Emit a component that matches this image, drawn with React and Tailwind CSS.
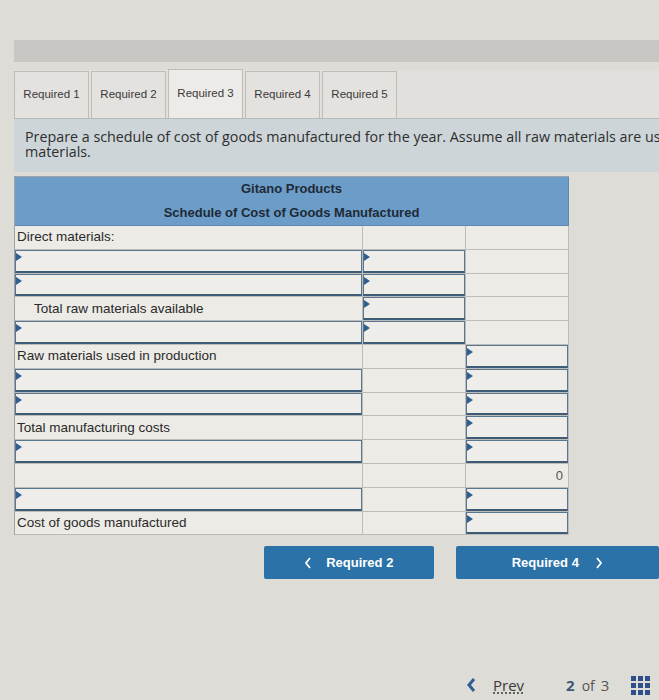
import React from "react";

const rows = [
  { label: "Direct materials:", c1: "text", c2: "empty", c3: "empty" },
  { c1: "input", c2: "input", c3: "empty" },
  { c1: "input", c2: "input", c3: "empty" },
  { label: "Total raw materials available", indent: true, c1: "text", c2: "input", c3: "empty" },
  { c1: "input", c2: "input", c3: "empty" },
  { label: "Raw materials used in production", c1: "text", c2: "empty", c3: "input" },
  { c1: "input", c2: "empty", c3: "input" },
  { c1: "input", c2: "empty", c3: "input" },
  { label: "Total manufacturing costs", c1: "text", c2: "empty", c3: "input" },
  { c1: "input", c2: "empty", c3: "input" },
  { c1: "empty", c2: "empty", c3: "zero" },
  { c1: "input", c2: "empty", c3: "input" },
  { label: "Cost of goods manufactured", c1: "text", c2: "empty", c3: "input" },
];

function InputBox() {
  return (
    <div className="relative h-full w-full border border-[#587591] border-b-2 border-b-[#3e5b78] bg-[#eeede9]">
      <span className="absolute left-0 top-[2px] h-0 w-0 border-y-[4px] border-y-transparent border-l-[6px] border-l-[#2f5f8f]" />
    </div>
  );
}

function Cell({ kind, label, indent, w }) {
  return (
    <div className={`${w} h-full border-r border-b border-[#bdbcb7] bg-[#ecebe6] flex items-center`}>
      {kind === "input" && <InputBox />}
      {kind === "text" && (
        <span className={`${indent ? "pl-[19px]" : "pl-[2px]"} text-[13.5px] text-[#2a2a2a]`}>{label}</span>
      )}
      {kind === "zero" && <span className="w-full pr-[5px] text-right text-[13px] text-[#555]">0</span>}
    </div>
  );
}

export default function App() {
  return (
    <div
      className="w-[659px] h-[700px] overflow-hidden bg-[#dedcd7] relative"
      style={{ fontFamily: '"Liberation Sans", Arial, sans-serif' }}
    >
      <div className="h-[40px]" />
      <div className="ml-[14px] h-[22px] bg-[#c9c7c3]" />
      <div className="ml-[14px] mt-[8px] flex items-end gap-[2px] h-[48px] bg-[#e2e0dc]">
        {["Required 1", "Required 2", "Required 3", "Required 4", "Required 5"].map((t, i) => (
          <div
            key={t}
            className={`w-[75px] flex items-center justify-center text-[11.5px] text-[#3a3a3a] border border-[#bfbdb8] ${
              i === 2 ? "h-[49px] bg-[#ecebe7] border-b-0 border-[#9d9b97]" : "h-[47px] bg-[#e4e2de] border-b-0"
            }`}
          >
            {t}
          </div>
        ))}
      </div>
      <div className="ml-[14px] h-[54px] bg-[#cdd5d8] pl-[11px] pt-[10px] border-t border-[#b4b9bb]" style={{ fontFamily: '"Open Sans", sans-serif' }}>
        <div className="whitespace-nowrap text-[14.3px] leading-[15px] text-[#2e2e2e]">
          Prepare a schedule of cost of goods manufactured for the year. Assume all raw materials are used as direct
        </div>
        <div className="whitespace-nowrap text-[14.3px] leading-[15px] text-[#2e2e2e]">materials.</div>
      </div>
      <div className="ml-[14px] mt-[4px] w-[555px] border-l border-t border-[#9fa3a6]">
        <div className="h-[49px] bg-[#6c9cc8] border-r border-b border-[#5d88b0] flex flex-col items-center justify-center text-[13px] font-bold text-[#1f2a36]">
          <div className="h-[24px] flex items-center">Gitano Products</div>
          <div className="h-[24px] flex items-center">Schedule of Cost of Goods Manufactured</div>
        </div>
        {rows.map((r, i) => (
          <div key={i} className="flex h-[23.8px]">
            <Cell kind={r.c1} label={r.label} indent={r.indent} w="w-[349px]" />
            <Cell kind={r.c2} w="w-[103px]" />
            <Cell kind={r.c3} w="w-[103px]" />
          </div>
        ))}
      </div>
      <div className="mt-[11px] flex gap-[22px] ml-[264px]">
        <div className="w-[170px] h-[33px] bg-[#2a72a8] rounded-[2px] flex items-center justify-center gap-[14px] text-white text-[13px] font-bold">
          <svg width="8" height="12" viewBox="0 0 8 12"><path d="M6 1 L2 6 L6 11" stroke="white" strokeWidth="1.8" fill="none" /></svg>
          <span>Required 2</span>
        </div>
        <div className="w-[204px] h-[33px] bg-[#2a72a8] rounded-[2px] flex items-center justify-center gap-[16px] text-white text-[13px] font-bold">
          <span>Required 4</span>
          <svg width="8" height="12" viewBox="0 0 8 12"><path d="M2 1 L6 6 L2 11" stroke="white" strokeWidth="1.8" fill="none" /></svg>
        </div>
      </div>
      <div className="absolute left-[466px] top-[674px] flex items-center" style={{ fontFamily: '"Open Sans", sans-serif' }}>
        <svg width="10" height="16" viewBox="0 0 10 16"><path d="M8 2 L3 8 L8 14" stroke="#2f5f95" strokeWidth="3" fill="none" /></svg>
        <span className="ml-[17px] text-[15px] text-[#3a3a3a] underline decoration-dotted underline-offset-2">Prev</span>
        <span className="ml-[42px] text-[15px] font-bold text-[#3c5874]">2</span>
        <span className="ml-[7px] text-[14px] text-[#555]">of</span>
        <span className="ml-[6px] text-[15px] text-[#555]">3</span>
        <div className="ml-[22px] grid grid-cols-3 gap-[2px]">
          {Array.from({ length: 9 }).map((_, k) => (
            <div key={k} className="w-[5px] h-[5px] bg-[#2e4f8a]" />
          ))}
        </div>
      </div>
    </div>
  );
}
